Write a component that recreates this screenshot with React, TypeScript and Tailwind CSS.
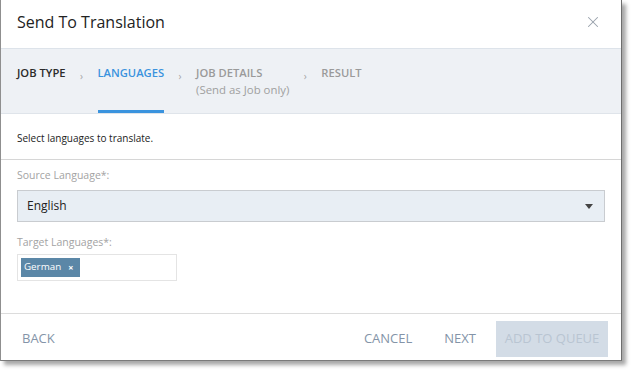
import { X } from "lucide-react";

const font = { fontFamily: '"Open Sans", "Noto Sans", sans-serif' };

function Step({ label, sub, state }: { label: string; sub?: string; state: "done" | "active" | "todo" }) {
  const color =
    state === "active" ? "text-[#3a93de]" : state === "done" ? "text-[#2b2b2b]" : "text-[#9a9a9a]";
  return (
    <div
      className={`flex flex-col pt-[17px] ${
        state === "active" ? "border-b-[3px] border-[#3a93de]" : "border-b-[3px] border-transparent"
      }`}
    >
      <span className={`text-[11.2px] font-semibold leading-[14px] ${color}`}>{label}</span>
      {sub && <span className="mt-[3px] text-[11.4px] leading-[14px] text-[#a0a0a0]">{sub}</span>}
    </div>
  );
}

function Sep() {
  return (
    <div className="flex w-[4px] items-start justify-center pt-[20px] text-[10px] leading-[14px] text-[#a5a5a5]">
      ›
    </div>
  );
}

export default function App() {
  return (
    <div className="h-[370px] w-[632px] bg-white" style={font}>
      <div className="flex h-[361px] w-[622px] flex-col border-x border-b border-l-[#8f8f8f] border-r-[#6d6d6d] border-b-[#7a7a7a] bg-white shadow-[4px_4px_4px_rgba(0,0,0,0.35)]">
        {/* Header */}
        <div className="flex h-[49px] items-center justify-between border-b border-[#dde3ea] pb-[5px] pl-[16px] pr-[19px]">
          <h1 className="text-[16px] leading-none text-[#222]">Send To Translation</h1>
          <X size={18} strokeWidth={1.4} className="text-[#98a1ab]" />
        </div>

        {/* Steps */}
        <div className="flex h-[65px] items-stretch gap-[14px] border-b border-[#dfe4ea] bg-[#eef1f5] pl-[16px]">
          <Step label="JOB TYPE" state="done" />
          <Sep />
          <Step label="LANGUAGES" state="active" />
          <Sep />
          <Step label="JOB DETAILS" sub="(Send as Job only)" state="todo" />
          <Sep />
          <Step label="RESULT" state="todo" />
        </div>

        {/* Body */}
        <div className="flex h-[46px] items-center border-b border-[#d6d6d6] pl-[16px] pt-[3px]">
          <span className="text-[10px] text-[#222]">Select languages to translate.</span>
        </div>

        <div className="flex flex-1 flex-col px-[16px] pt-[8px]">
          <span className="text-[10.5px] leading-[14px] text-[#a3a3a3]">Source Language*:</span>
          <div className="mt-[8px] flex h-[32px] w-[588px] items-center justify-between border border-[#c9ccd0] bg-[#e8eef4] pl-[9px] pr-[11px]">
            <span className="text-[12px] text-[#222]">English</span>
            <svg width="8" height="5" viewBox="0 0 8 5">
              <path d="M0 0h8L4 5z" fill="#444" />
            </svg>
          </div>
          <span className="mt-[13px] text-[10.5px] leading-[14px] text-[#a3a3a3]">Target Languages*:</span>
          <div className="mt-[5px] flex h-[27px] w-[160px] items-center border border-[#e4e4e4] bg-white pl-[3px]">
            <span className="flex h-[19px] items-center gap-[7px] bg-[#5b87a7] pl-[3px] pr-[7px] text-[9.8px] text-white">
              German
              <span className="text-[9px] font-bold leading-none">×</span>
            </span>
          </div>
        </div>

        {/* Footer */}
        <div className="flex h-[47px] items-start justify-between border-t border-[#dcdcdc] pl-[21px] pr-[13px] pt-[7px]">
          <span className="flex h-[36px] items-center text-[13px] text-[#8494a8]">BACK</span>
          <div className="flex items-center">
            <span className="text-[13px] text-[#8494a8]">CANCEL</span>
            <span className="ml-[32px] text-[13px] text-[#8494a8]">NEXT</span>
            <button className="ml-[20px] flex h-[36px] w-[112px] items-center justify-center bg-[#d3dce6] text-[13px] text-[#b9c5d2]">
              ADD TO QUEUE
            </button>
          </div>
        </div>
      </div>
    </div>
  );
}
